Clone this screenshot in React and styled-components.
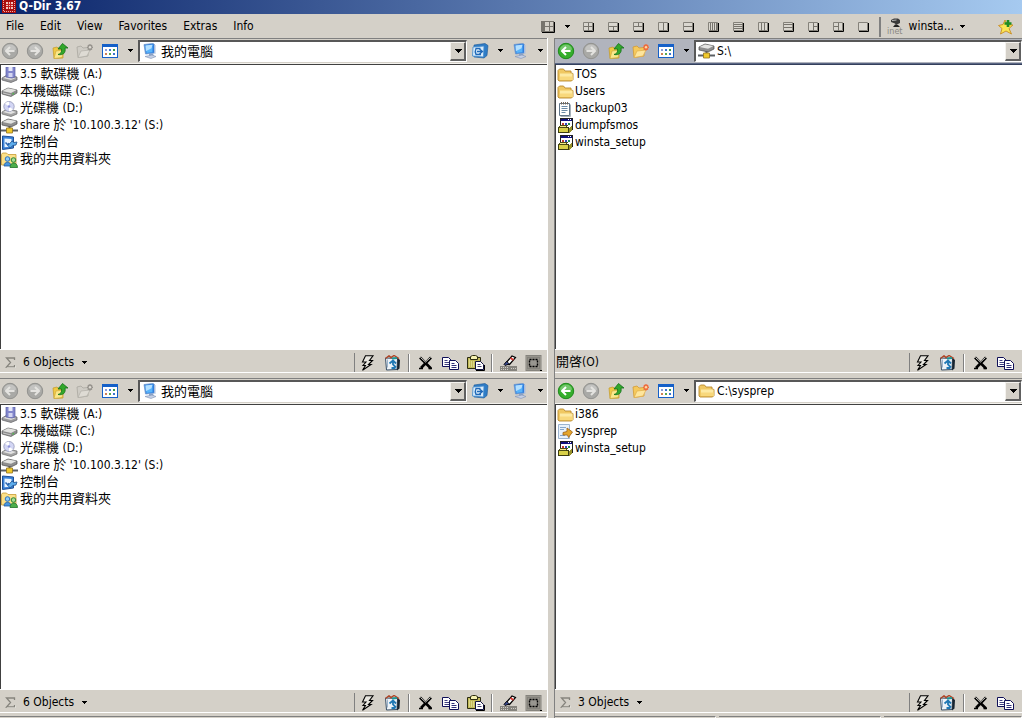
import { useState } from "react";
import styled, { createGlobalStyle, css } from "styled-components";

const GlobalStyle = createGlobalStyle`
  * {
    box-sizing: border-box;
  }

  body {
    margin: 0;
    background: #d4d0c8;
    color: #000;
    font-family: "DejaVu Sans Condensed", "DejaVu Sans", "Noto Sans CJK TC", sans-serif;
    font-size: 12px;
    line-height: 17px;
  }

  button,
  select {
    font: inherit;
    color: inherit;
    border: 0;
    padding: 0;
    margin: 0;
    background: none;
    border-radius: 0;
  }

  svg {
    display: block;
    flex: none;
  }
`;

/* ---------- icons ---------- */

const Svg = ({ w = 16, h = 16, children, crisp }) => (
  <svg
    width={w}
    height={h}
    viewBox={`0 0 ${w} ${h}`}
    fill="none"
    shapeRendering={crisp ? "crispEdges" : "auto"}
    aria-hidden="true"
  >
    {children}
  </svg>
);

const Caret = () => (
  <Svg w={6} h={4} crisp>
    <path d="M0 0h6L3 3z" fill="#000" />
  </Svg>
);

const LogoIcon = () => (
  <Svg w={14} h={13}>
    <path d="M0 0h14v13H0z" fill="#a80c0c" />
    <path d="M1.500 0v11.500h11V0" stroke="#f0b0a8" strokeDasharray="1 1" />
    <path d="M4 2h7v7H4z" fill="#f4c8c0" />
    <path d="M6.500 2v7M4 4.500h7M4 6.500h7M8.500 2v7" stroke="#c02020" />
  </Svg>
);

const ArrowIcon = ({ flip, active }) => (
  <Svg w={18} h={18}>
    <circle cx="9" cy="9" r="7.700" fill={active ? "#35ae2c" : "#a9a9a6"} stroke={active ? "#1f8a1c" : "#92928f"} />
    <path d="M3 7.500a6 5 0 0 1 12 0c-3 2-9 2-12 0z" fill="#fff" opacity="0.3" />
    <path
      d={flip ? "M4.500 9h8M9 5l4 4-4 4" : "M13.500 9h-8M9 5L5 9l4 4"}
      stroke={active ? "#fff" : "#e4e3e0"}
      strokeWidth="2"
    />
  </Svg>
);

const UpIcon = () => (
  <Svg>
    <path d="M1 5l4-1 1 1 5 1v9l-9 .5z" fill="#f1c944" stroke="#c19a28" strokeWidth=".7" />
    <path d="M2 15.500L4 8l8-1-2 7.500z" fill="#fbe88c" stroke="#c9a53a" strokeWidth=".6" />
    <path d="M6 11.500c3-1 4-2.500 3.500-5.500H6L10.500.5 16 5h-3c1 5-2 7.500-7 6.500z" fill="#32a82b" stroke="#14701a" strokeWidth=".8" />
  </Svg>
);

const NewFolderIcon = ({ active }) => (
  <Svg w={18}>
    <path
      d="M1 4l4-1 2 2 5-.5V13l-10 1.500z"
      fill={active ? "#f5c95c" : "#cfccc5"}
      stroke={active ? "#d39a34" : "#aaa7a0"}
      strokeWidth=".8"
    />
    <path
      d="M2 14.500L5 8l9-1-3 6z"
      fill={active ? "#fde59c" : "#dedbd4"}
      stroke={active ? "#dfae4c" : "#b2afa8"}
      strokeWidth=".7"
    />
    <path
      d="M14 1v6.500M11 4.200h6M12 2l4 4.500M16 2l-4 4.500"
      stroke={active ? "#ef6a3c" : "#96938d"}
      strokeWidth="1.400"
    />
    <circle cx="14" cy="4.200" r="1.200" fill={active ? "#ffd9a0" : "#dedbd4"} />
  </Svg>
);

const ViewsIcon = () => (
  <Svg w={16} h={14} crisp>
    <path d="M0 0h16v14H0z" fill="#1560c8" />
    <path d="M1 3h14v10H1z" fill="#fff" />
    <path d="M3 5h2v2H3z" fill="#8c9cd8" />
    <path d="M7 5h2v2H7zM11 9h2v2h-2z" fill="#3c74d0" />
    <path d="M11 5h2v2h-2z" fill="#3a9a4c" />
    <path d="M3 9h2v2H3z" fill="#d08054" />
    <path d="M7 9h2v2H7z" fill="#5aa84c" />
  </Svg>
);

const ComputerIcon = () => (
  <Svg w={17}>
    <path d="M2 1.500l9-1 1.500 1v8.500l-9 1z" fill="#2f7fe0" stroke="#6f97cc" strokeWidth=".8" />
    <path d="M3.500 2.500l7-.8v7.500l-6 .8z" fill="#59b4fa" />
    <path d="M3.500 2.500l7-.8-1 3.500-5.700 3z" fill="#b4e0ff" />
    <path d="M12 1l1.500 1.500V11L12 10z" fill="#a9bcdb" />
    <path d="M7 11l4-.5 1 3H7z" fill="#8ea4c8" />
    <path d="M3 13.500l7-1.500 4 1.500-5 2z" fill="#c5d0e4" stroke="#7f92b5" strokeWidth=".6" />
  </Svg>
);

const LinkIcon = () => (
  <Svg w={18}>
    <path d="M3 2l11-1.500 3 2-1 10-3 2.500-10-1z" fill="#2e7cc6" stroke="#1c5894" strokeWidth=".6" />
    <path d="M2 4l11-1-.5 11-11-1z" fill="#d8ecfb" stroke="#3f88cc" strokeWidth=".8" />
    <path d="M9.500 5.500H5c-1 2-1 4 0 6h5M6 8.500h5M8.500 6l3 2.500-3 2.500" stroke="#1f68b8" strokeWidth="1.300" />
  </Svg>
);

const FloppyIcon = () => (
  <Svg w={17}>
    <path d="M1 11l5-3 10 2v3l-6 2.500L1 13z" fill="#9a9a9c" stroke="#606064" strokeWidth=".7" />
    <path d="M2 11l5-2 8 2-5 2z" fill="#dcdcdc" />
    <path d="M5 0h9v10l-3 1-6-1z" fill="#8286cc" stroke="#5a5ea4" strokeWidth=".7" />
    <path d="M7.500 0h4v4h-4z" fill="#e6e8f8" />
    <path d="M7.500 6h4v4h-4z" fill="#d4d6f2" />
  </Svg>
);

const DiskIcon = () => (
  <Svg w={17}>
    <path d="M1 7l6-3 9 2v3l-6 3.500L1 10z" fill="#8c8c8c" stroke="#5c5c5c" strokeWidth=".7" />
    <path d="M1.500 7L7 4.300 15.500 6 10 9z" fill="#e2e2e0" />
    <path d="M2 9l8 2" stroke="#c8c8c8" />
    <path d="M11.500 10.200l1.500-1" stroke="#48c048" strokeWidth="1.200" />
  </Svg>
);

const CdIcon = () => (
  <Svg w={17}>
    <path d="M1 11l5-3 10 2v3l-6 2.500L1 13z" fill="#a4a4a4" stroke="#6c6c6c" strokeWidth=".7" />
    <path d="M2 11l5-2 8 2-5 2z" fill="#e4e4e4" />
    <ellipse cx="8" cy="5.500" rx="5.200" ry="5" fill="#d3d6f4" stroke="#888cae" strokeWidth=".7" />
    <path d="M8 5.500L4 2.500a5 5 0 0 1 4-1.800zM8 5.500l4 3a5 5 0 0 1-4 1.800z" fill="#fff" />
    <circle cx="8" cy="5.500" r="1.300" fill="#8c92d8" />
  </Svg>
);

const NetDriveIcon = () => (
  <Svg w={17}>
    <path d="M1 4l6-3 9 2v3l-6 3-9-2z" fill="#8e8e8e" stroke="#4c4c4c" strokeWidth=".7" />
    <path d="M1.500 4L7 1.500 15.500 3 10 5.700z" fill="#e4e4e2" />
    <path d="M8.500 8v4" stroke="#5c5c5c" strokeWidth="2" />
    <path d="M0 12.500h17" stroke="#5c6064" strokeWidth="2" />
    <path d="M5.500 10h6v5h-6z" fill="#f0c92c" stroke="#94741c" strokeWidth=".8" />
  </Svg>
);

const PanelIcon = () => (
  <Svg w={17}>
    <path d="M1.500 1l11 1v11l-11 1.500z" fill="#3b82d8" stroke="#1d5099" />
    <path d="M3.500 3.500l7 .5v7.500l-7 .7z" fill="#e8f3ff" />
    <path d="M4.500 7.500L7 10l1-2" stroke="#2a66b4" strokeWidth="1.500" />
    <path d="M7 10.500l4-4.500 2 1.500 3-.5-1 3-3 .5-3 2.500z" fill="#5cacec" stroke="#1f4f8c" strokeWidth=".8" />
  </Svg>
);

const SharedIcon = () => (
  <Svg w={17}>
    <path d="M.5 2.500l1-1.500h4l1.500 1.500h8V13H.5z" fill="#fbe088" stroke="#c69a34" strokeWidth=".8" />
    <circle cx="6.500" cy="7" r="2.300" fill="#8ecbf5" stroke="#2e74bc" />
    <path d="M3 14c0-5 7-5 7 0z" fill="#4696e0" stroke="#1f5ca4" strokeWidth=".8" />
    <circle cx="12.500" cy="8" r="2.300" fill="#a4dc94" stroke="#2c8434" />
    <path d="M9 15.500c0-6 7.500-6 7.500 0z" fill="#4cae4c" stroke="#1f7428" strokeWidth=".8" />
  </Svg>
);

const FolderIcon = () => (
  <Svg w={17}>
    <path d="M1 3.500L2.500 2h4L8 4h6v2l2 .5v6l-1.500 1.500H2L1 13z" fill="#f0c862" stroke="#b98a30" strokeWidth=".9" />
    <path d="M3 6.500h12.500v6.500H3z" fill="#fdeaa4" />
    <path d="M3 9.500h12.500V13H3z" fill="#f8d87c" />
  </Svg>
);

const NoteIcon = () => (
  <Svg w={17}>
    <path d="M2.500 2.500h10v12h-10z" fill="#fff" stroke="#5f7488" />
    <path d="M13.500 3.500v12h-10" stroke="#a7b0b8" />
    <path d="M4.500 1v2.500M6.500 1v2.500M8.500 1v2.500M10.500 1v2.500" stroke="#76685a" />
    <path d="M4.500 5.500h6M4.500 7.500h6M4.500 9.500h6M4.500 11.500h4" stroke="#6b8aa6" />
  </Svg>
);

const SetupIcon = () => (
  <Svg w={17} crisp>
    <path d="M3 0h13v12H3z" fill="#202020" />
    <path d="M4 1h11v10H4z" fill="#fff" />
    <path d="M4 1h11v2H4z" fill="#10107c" />
    <path d="M11 1h1v1h-1zM13 1h1v1h-1z" fill="#fff" />
    <path d="M5 5h2v2H5z" fill="#c03c30" />
    <path d="M8 5h2v2H8z" fill="#3048c0" />
    <path d="M11 5h2v2h-2z" fill="#208c50" />
    <path d="M1 9h11v6H1z" fill="#3c3c10" />
    <path d="M2 10h9v4H2z" fill="#d8d048" />
    <path d="M0 10l3-3h8l-2 3z" fill="#4c4c14" />
    <path d="M2 9l2-1h5l-1 1z" fill="#f4ec8c" />
    <path d="M12 10l3-2v5l-3 2z" fill="#98922c" />
  </Svg>
);

const ScriptIcon = () => (
  <Svg w={17}>
    <path d="M1.500.5h11v14h-11z" fill="#e8f1fb" stroke="#9cb4d0" />
    <path d="M3 3.500h6M3 5.500h4M3 11.500h5" stroke="#86a6cc" />
    <path d="M6 8.500l4-1V4l5.500 4-4 5.500-1-2.500H6z" fill="#e5a62c" stroke="#9c5f18" strokeWidth=".8" />
  </Svg>
);

const BoltIcon = () => (
  <Svg w={15}>
    <path d="M5.500.8H13L9.500 5.500h3L8.500 9.500H11L2.500 15.300l3-4.800H3L6 7H2.500z" fill="#e8e6df" stroke="#000" strokeWidth="1.100" />
  </Svg>
);

const RecycleIcon = () => (
  <Svg w={17}>
    <path d="M1.500 3l12 .5-.5 11-10.500.5z" fill="#eef3f8" stroke="#385068" />
    <path d="M13.500 3l2.500 2-.5 8.500-2.500 2z" fill="#182430" />
    <path d="M5.500 8.500L9 5.500l3 3M9 6v3.500l3 3M7.500 13h4" stroke="#2078b4" strokeWidth="1.800" />
    <path d="M1.500 3.500L5 .8l2 1.700 3-2 5 3" stroke="#b04424" strokeWidth="1.400" />
    <path d="M8 3.500l5-.5" stroke="#1c9494" strokeWidth="2" />
    <path d="M3.500 4.500v8" stroke="#9cb4cc" />
  </Svg>
);

const DeleteIcon = () => (
  <Svg w={15} h={14}>
    <path d="M2 1.500L13 12.500M13 1.500L3 12" stroke="#000" strokeWidth="2.600" />
    <path d="M2.500 1.500l5 4.500L12.500 1.500" stroke="#f0efea" strokeWidth=".9" />
    <path d="M1 12.500h4M10.500 12.500H14" stroke="#000" strokeWidth="1.400" />
  </Svg>
);

const CopyIcon = () => (
  <Svg w={17} h={14}>
    <path d="M.5 1.500h6l3 3v6h-9z" fill="#fff" stroke="#101058" />
    <path d="M2.500 4.500h3M2.500 6.500h5M2.500 8.500h5" stroke="#404080" />
    <path d="M7.500 4.500h6l3 3v6h-9z" fill="#fff" stroke="#101058" />
    <path d="M9.500 7.500h3M9.500 9.500h5M9.500 11.500h5" stroke="#303078" />
  </Svg>
);

const PasteIcon = () => (
  <Svg w={19} h={16}>
    <path d="M1.500 2.500h13v11h-13z" fill="#c2ba58" stroke="#2c2c10" />
    <path d="M3.500 4v8M5.500 6v6M7.500 6v6" stroke="#ddd78c" />
    <path d="M4.500 1.500l2-1h3l2 1v3h-7z" fill="#f4f0b0" stroke="#2c2c10" />
    <path d="M9.500 6.500h5l3 3v5h-8z" fill="#fff" stroke="#101040" />
    <path d="M11.500 9.500h3M11.500 11.500h4" stroke="#404070" />
    <path d="M10 15.500h8.500V10" stroke="#000" />
  </Svg>
);

const BrushIcon = () => (
  <Svg w={17}>
    <path d="M5 9l7-8 3.500 1.500-6 7z" fill="#fff" stroke="#000" strokeWidth="1.200" />
    <path d="M4 9.500l2.500-3 3 2.500-4.500 1.500z" fill="#3c4c90" stroke="#000" strokeWidth=".8" />
    <path d="M10.500 3l3 2" stroke="#d8342c" strokeWidth="1.800" />
    <path d="M0 11h17v5H0z" fill="#85837d" />
    <path d="M1 12.500h7M1 14.500h7M11 13.500h5" stroke="#cfccc4" strokeDasharray="1 1" />
  </Svg>
);

const SelectIcon = () => (
  <Svg w={17}>
    <path d="M.5 0h16v16H.5z" fill="#85837d" />
    <path d="M1.500 1.500h14v13h-14zM3.500 3.500h10v9h-10z" stroke="#a8a59d" strokeDasharray="1 1" />
    <path d="M4.500 4.500h8v7h-8z" fill="#989690" stroke="#000" strokeWidth="1.400" strokeDasharray="2 1" />
    <path d="M15 15h2v1h-2z" fill="#000" />
  </Svg>
);

const SigmaIcon = () => (
  <Svg w={11} h={11}>
    <path d="M9.500 3V1H1.500l4 4.500L1.500 10h8V8" stroke="#86847d" strokeWidth="1.300" />
    <path d="M2 10.700h8.500V8.500" stroke="#f4f2ec" strokeWidth=".6" />
  </Svg>
);

const InetIcon = () => (
  <Svg w={17} h={17}>
    <path d="M4 2l3-1.500h4l2 1.500v3L9 7l-1-1.500L4 4z" fill="#3a3a3a" />
    <path d="M5 2.500L9.500 2" stroke="#b8b8b8" />
    <path d="M8 6.500L11 7l2 2H6z" fill="#222" />
    <text x="0" y="16" fontSize="9" fill="#8a8882">
      inet
    </text>
  </Svg>
);

const StarIcon = () => (
  <Svg>
    <path d="M7 1l2 4.500 6 .5-4 3.500 2.500 5.500L8 12l-5.500 3 1.500-5.500L.5 6.500l4.500-1z" fill="#fbe654" stroke="#c88c24" strokeWidth=".9" />
    <path d="M10 1v7M6.500 4.500h7" stroke="#1f8c24" strokeWidth="2.600" />
  </Svg>
);

const layouts = [
  { name: "Four panes", d: "M5.500 1v8M1 4.500h9" },
  { name: "One over two", d: "M1 4.500h9M5.500 5v4" },
  { name: "Two over one", d: "M1 4.500h9M5.500 1v4" },
  { name: "Two columns", d: "M5.500 1v8" },
  { name: "Two rows", d: "M1 4.500h9" },
  { name: "Four columns", d: "M2.500 1v8M4.500 1v8M6.500 1v8M8.500 1v8" },
  { name: "Four rows", d: "M1 2.500h9M1 4.500h9M1 6.500h9" },
  { name: "Three columns", d: "M3.500 1v8M6.500 1v8" },
  { name: "Three rows", d: "M1 2.500h9M1 5.500h9" },
  { name: "One beside two", d: "M5.500 1v8M6 4.500h4" },
  { name: "Two beside one", d: "M5.500 1v8M1 4.500h4" },
  { name: "Single pane", d: "" },
];

const LayoutIcon = ({ d }) => (
  <Svg w={11} h={12}>
    <path d="M.5 1.500h9v8h-9z" fill="#dad7d0" stroke="#85827b" />
    <g transform="translate(0 1)">
      <path d={d} stroke="#77746d" />
    </g>
    <path d="M10.500 2v8.500H1" stroke="#000" />
  </Svg>
);

const ActiveLayoutIcon = () => (
  <Svg w={14} h={12}>
    <path d="M0 0h13v11H0z" fill="#77746d" />
    <path d="M4 1h8v9H4z" fill="#d4d0c8" />
    <path d="M8.500 1v9M4 5.500h8" stroke="#77746d" />
    <path d="M13.500 1v10.500H1" stroke="#000" />
  </Svg>
);

/* ---------- data ---------- */

const drives = [
  { icon: FloppyIcon, name: "3.5 軟碟機 (A:)" },
  { icon: DiskIcon, name: "本機磁碟 (C:)" },
  { icon: CdIcon, name: "光碟機 (D:)" },
  { icon: NetDriveIcon, name: "share 於 '10.100.3.12' (S:)" },
  { icon: PanelIcon, name: "控制台" },
  { icon: SharedIcon, name: "我的共用資料夾" },
];

const shareFiles = [
  { icon: FolderIcon, name: "TOS" },
  { icon: FolderIcon, name: "Users" },
  { icon: NoteIcon, name: "backup03" },
  { icon: SetupIcon, name: "dumpfsmos" },
  { icon: SetupIcon, name: "winsta_setup" },
];

const sysprepFiles = [
  { icon: FolderIcon, name: "i386" },
  { icon: ScriptIcon, name: "sysprep" },
  { icon: SetupIcon, name: "winsta_setup" },
];

const menus = ["File", "Edit", "View", "Favorites", "Extras", "Info"];

/* ---------- components ---------- */

// Chinese runs are set one size larger than the Latin text around them
const Label = ({ text }) =>
  text
    .split(/([\u3400-\u9fff]+)/)
    .filter(Boolean)
    .map((part, i) => (/[\u3400-\u9fff]/.test(part) ? <Cjk key={i}>{part}</Cjk> : part));

function AddressBox({ id, icon: Icon, path, cjk }) {
  return (
    <Address>
      <Icon />
      <AddressSelect aria-label={`Address ${id}`} $cjk={cjk} defaultValue={path}>
        <option>{path}</option>
      </AddressSelect>
      <AddressArrow>
        <Svg w={8} h={4} crisp>
          <path d="M0 0h8L4 4z" fill="#000" />
        </Svg>
      </AddressArrow>
    </Address>
  );
}

function Pane(props) {
  const { id, path, pathIcon, cjk, items, status, side, active, last } = props;
  const [selected, setSelected] = useState(null);
  const right = side === "right";

  return (
    <StyledPane $right={right}>
      <Toolbar $right={right} $active={active}>
        <ToolButton aria-label="Back">
          <ArrowIcon active={right} />
        </ToolButton>
        <ToolButton aria-label="Forward">
          <ArrowIcon flip />
        </ToolButton>
        <ToolButton aria-label="Up">
          <UpIcon />
        </ToolButton>
        <ToolButton aria-label="New folder">
          <NewFolderIcon active={right} />
        </ToolButton>
        <ToolButton aria-label="Views">
          <ViewsIcon />
        </ToolButton>
        <ArrowButton aria-label="Choose view">
          <Caret />
        </ArrowButton>
        <AddressBox id={id} icon={pathIcon} path={path} cjk={cjk} />
        {!right && (
          <ToolGroup>
            <ToolButton aria-label="Quick links">
              <LinkIcon />
            </ToolButton>
            <ArrowButton aria-label="Choose link">
              <Caret />
            </ArrowButton>
            <ToolButton aria-label="My computer">
              <ComputerIcon />
            </ToolButton>
            <ArrowButton aria-label="Choose place">
              <Caret />
            </ArrowButton>
          </ToolGroup>
        )}
      </Toolbar>
      <FileList $active={active}>
        {items.map(({ icon: Icon, name }) => (
          <FileRow key={name} $right={right} $selected={selected === name} onClick={() => setSelected(name)}>
            <Icon />
            <span>
              <Label text={name} />
            </span>
          </FileRow>
        ))}
      </FileList>
      <StatusBar>
        {status ? (
          <StatusText>
            <Label text={status} />
          </StatusText>
        ) : (
          <StatusButton>
            <SigmaIcon />
            {items.length} Objects
            <Caret />
          </StatusButton>
        )}
        <StatusTools $right={right}>
          <StatusTool aria-label="Quick actions">
            <BoltIcon />
          </StatusTool>
          <StatusTool aria-label="Recycle bin">
            <RecycleIcon />
          </StatusTool>
          <Divider />
          <StatusTool aria-label="Delete">
            <DeleteIcon />
          </StatusTool>
          <StatusTool aria-label="Copy">
            <CopyIcon />
          </StatusTool>
          {!right && (
            <>
              <StatusTool aria-label="Paste">
                <PasteIcon />
              </StatusTool>
              <Divider />
              <StatusTool aria-label="Rename">
                <BrushIcon />
              </StatusTool>
              <StatusTool aria-label="Select all">
                <SelectIcon />
              </StatusTool>
            </>
          )}
        </StatusTools>
      </StatusBar>
      <PaneFoot>
        {last && <FootCell $grow={7} />}
        {last && right && <FootCell $grow={7} />}
        {last && right && <FootCell $grow={6} />}
      </PaneFoot>
    </StyledPane>
  );
}

export default function App() {
  return (
    <Window>
      <GlobalStyle />
      <TitleBar>
        <LogoIcon />
        <h1>Q-Dir 3.67</h1>
      </TitleBar>
      <MenuBar>
        <Menus>
          {menus.map((name) => (
            <button key={name}>{name}</button>
          ))}
        </Menus>
        <LayoutTools>
          <ToolButton aria-label="Current layout">
            <ActiveLayoutIcon />
          </ToolButton>
          <LayoutArrow aria-label="Choose layout">
            <Caret />
          </LayoutArrow>
          {layouts.map((item) => (
            <LayoutButton key={item.name} aria-label={item.name}>
              <LayoutIcon d={item.d} />
            </LayoutButton>
          ))}
          <MenuDivider />
          <InetButton>
            <InetIcon />
            winsta...
            <Caret />
          </InetButton>
        </LayoutTools>
        <ToolButton aria-label="Add favorite">
          <StarIcon />
        </ToolButton>
      </MenuBar>
      <Panes>
        <Pane id={1} side="left" path="我的電腦" cjk pathIcon={ComputerIcon} items={drives} />
        <Pane id={2} side="right" path="S:\" pathIcon={NetDriveIcon} items={shareFiles} status="開啓(O)" active />
        <Pane id={3} side="left" path="我的電腦" cjk pathIcon={ComputerIcon} items={drives} last />
        <Pane id={4} side="right" path="C:\sysprep" pathIcon={FolderIcon} items={sysprepFiles} last />
      </Panes>
    </Window>
  );
}

/* ---------- styles ---------- */

const Window = styled.div`
  min-height: 100vh;
  display: flex;
  flex-direction: column;
`;

const TitleBar = styled.header`
  height: 14px;
  padding-left: 2px;
  display: flex;
  gap: 3px;
  background: linear-gradient(to right, #0a246a, #a6caf0);

  h1 {
    margin: 0;
    color: #fff;
    font-size: 12px;
    font-weight: 700;
    line-height: 12px;
  }
`;

const MenuBar = styled.div`
  height: 24px;
  padding: 1px 6px 0;
  display: flex;
  align-items: center;
`;

const Menus = styled.nav`
  flex: 1;
  display: flex;
  gap: 16px;
`;

const LayoutTools = styled.div`
  margin-right: 31px;
  display: flex;
  align-items: center;
`;

const buttonBase = css`
  display: flex;
  align-items: center;
  justify-content: center;
  flex: none;
`;

const ToolButton = styled.button`
  ${buttonBase}
  width: 20px;
  height: 20px;
`;

const ArrowButton = styled.button`
  ${buttonBase}
  width: 10px;
  height: 20px;
`;

const LayoutArrow = styled(ArrowButton)`
  width: 18px;
`;

const LayoutButton = styled.button`
  ${buttonBase}
  width: 25px;
  height: 20px;
`;

const MenuDivider = styled.span`
  width: 2px;
  height: 20px;
  margin: 0 6px 0 3px;
  background: #808080;
`;

const InetButton = styled.button`
  ${buttonBase}
  gap: 5px;
`;

const Panes = styled.main`
  flex: 1;
  display: grid;
  grid-template-columns: minmax(0, 548fr) minmax(0, 468fr);
  grid-template-rows: 1fr 1fr;
  column-gap: 6px;
`;

const StyledPane = styled.section`
  display: flex;
  flex-direction: column;
  ${({ $right }) => ($right ? "border-left: 1px solid #808080;" : "border-right: 1px solid #fff;")}
`;

const Toolbar = styled.div`
  height: 26px;
  padding: ${({ $right }) => ($right ? "0 0 1px 1px" : "0 2px 1px 0")};
  display: flex;
  align-items: center;
  gap: 5px;
  border-top: 1px solid #808080;
  border-bottom: 1px solid ${({ $active }) => ($active ? "#5a6684" : "#f4f2ee")};
  background: ${({ $active }) => ($active ? "#b1b4bd" : "#d4d0c8")};
`;

const ToolGroup = styled.div`
  display: flex;
  gap: 5px;
  margin-left: -2px;
`;

const Address = styled.div`
  position: relative;
  flex: 1;
  height: 22px;
  margin-left: -2px;
  padding-left: 2px;
  display: flex;
  align-items: center;
  gap: 2px;
  background: #fff;
  border: 1px solid #fff;
  border-top: 2px solid #585858;
  border-left: 2px solid #585858;
`;

const AddressSelect = styled.select`
  appearance: none;
  flex: 1;
  min-width: 0;
  height: 18px;
  outline: none;
  font-size: ${({ $cjk }) => ($cjk ? "13px" : "12px")};
`;

const AddressArrow = styled.span`
  position: absolute;
  top: 0;
  right: 0;
  bottom: 0;
  width: 16px;
  display: flex;
  align-items: center;
  justify-content: center;
  background: #d4d0c8;
  border: 1px solid #f4f2ee;
  border-right: 2px solid #606060;
  border-bottom: 2px solid #606060;
  pointer-events: none;
`;

const FileList = styled.ul`
  flex: 1;
  margin: 0;
  padding: 1px 0 0;
  list-style: none;
  background: #fff;
  border-top: 1px solid ${({ $active }) => ($active ? "#34405c" : "#404040")};
  border-left: 1px solid #404040;
`;

const FileRow = styled.li`
  height: 17px;
  display: flex;
  align-items: center;
  gap: ${({ $right }) => ($right ? "1px" : "2px")};
  padding-left: ${({ $right }) => ($right ? "1px" : "0")};
  cursor: default;
  white-space: nowrap;

  span {
    line-height: 17px;
    ${({ $selected }) => $selected && "background: #0a246a; color: #fff;"}
  }
`;

const Cjk = styled.span`
  && {
    font-size: 13px;
    line-height: 1;
  }
`;

const StatusBar = styled.footer`
  height: 24px;
  padding-top: 3px;
  display: flex;
  align-items: center;
  justify-content: space-between;
  border-top: 1px solid #fff;
  border-bottom: 1px solid #fff;
`;

const StatusText = styled.span`
  padding-left: 1px;
`;

const StatusButton = styled.button`
  ${buttonBase}
  gap: 7px;
  padding-left: 5px;
`;

const StatusTools = styled.div`
  height: 19px;
  padding-right: ${({ $right }) => ($right ? "4px" : "1px")};
  display: flex;
  align-items: center;
  border-left: 1px solid #808080;
`;

const StatusTool = styled.button`
  ${buttonBase}
  width: 25px;
  height: 18px;
`;

const Divider = styled.span`
  width: 2px;
  height: 18px;
  margin: 0 3px;
  background: #808080;
  border-right: 1px solid #fff;
`;

const PaneFoot = styled.div`
  height: 5px;
  padding-top: 3px;
  display: flex;
  gap: 3px;
`;

const FootCell = styled.span`
  flex: ${({ $grow }) => $grow};
  border-top: 1px solid #808080;
  border-right: 1px solid #fff;
`;
